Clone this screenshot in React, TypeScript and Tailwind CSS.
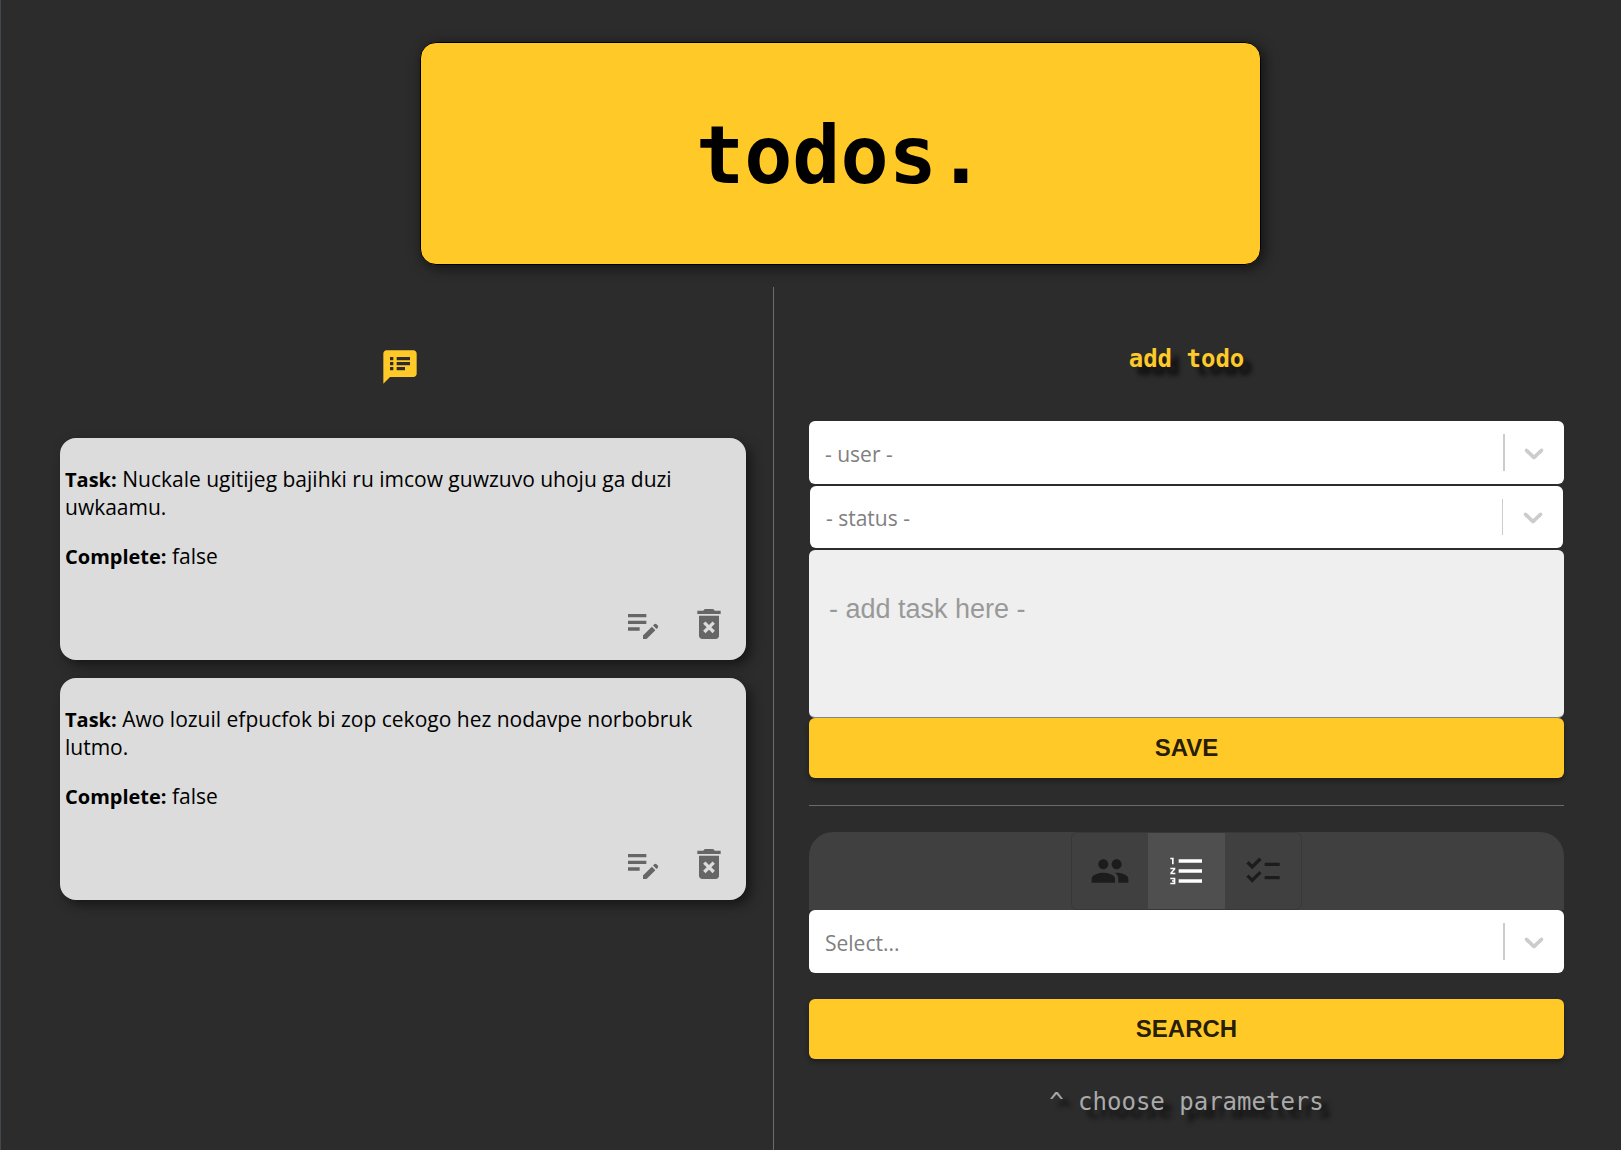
import type { ReactNode } from "react";
import {
  MdChecklist,
  MdDeleteForever,
  MdEditNote,
  MdFormatListNumbered,
  MdPeople,
  MdSpeakerNotes,
} from "react-icons/md";

const todos = [
  { id: 1, task: "Nuckale ugitijeg bajihki ru imcow guwzuvo uhoju ga duzi uwkaamu.", complete: false },
  { id: 2, task: "Awo lozuil efpucfok bi zop cekogo hez nodavpe norbobruk lutmo.", complete: false },
];

function TodoCard({ task, complete }: { task: string; complete: boolean }) {
  return (
    <li className="flex flex-col rounded-2xl bg-[#dcdcdc] pt-[27px] pr-[17px] pb-4 pl-[5px] text-[21px] leading-7 text-black shadow-[5px_5px_12px_rgba(0,0,0,0.5)]">
      <p className="pr-8">
        <b className="text-[20px] leading-none font-bold">Task:</b> {task}
      </p>
      <p className="mt-[21px]">
        <b className="text-[20px] leading-none font-bold">Complete:</b> {String(complete)}
      </p>
      <div className="mt-[34px] flex justify-end gap-[26px] text-[#666]">
        <button type="button" aria-label="Edit todo">
          <MdEditNote size={40} />
        </button>
        <button type="button" aria-label="Delete todo">
          <MdDeleteForever size={40} />
        </button>
      </div>
    </li>
  );
}

function Picker({ label, placeholder, inset = false }: { label: string; placeholder: string; inset?: boolean }) {
  return (
    <div
      className={
        inset
          ? "mx-px flex h-[62px] items-center rounded-md bg-white pr-[14px]"
          : "flex h-[63px] items-center rounded-md bg-white pr-[14px]"
      }
    >
      <select
        aria-label={label}
        defaultValue=""
        className="h-full min-w-0 flex-1 appearance-none bg-transparent pt-1 pl-4 text-[21px] text-[#808080] outline-none"
      >
        <option value="">{placeholder}</option>
      </select>
      <span className={inset ? "mr-[14px] h-9 w-px bg-[#ccc]" : "mr-[13px] h-[37px] w-[2px] bg-[#ccc]"} />
      <svg viewBox="0 0 20 20" className="pointer-events-none size-8 fill-[#ccc]" aria-hidden="true">
        <path d="M4.516 7.548c0.436-0.446 1.043-0.481 1.576 0l3.908 3.747 3.908-3.747c0.533-0.481 1.141-0.446 1.574 0 0.436 0.445 0.408 1.197 0 1.615-0.406 0.418-4.695 4.502-4.695 4.502-0.217 0.223-0.502 0.335-0.787 0.335s-0.57-0.112-0.789-0.335c0 0-4.287-4.084-4.695-4.502s-0.436-1.17 0-1.615z" />
      </svg>
    </div>
  );
}

function ActionButton({ children }: { children: ReactNode }) {
  return (
    <button
      type="submit"
      className="block h-[60px] w-full rounded-md bg-[#ffca28] font-['Liberation_Sans',sans-serif] text-[24px] font-bold text-black/87 shadow-[0_3px_5px_rgba(0,0,0,0.35)]"
    >
      {children}
    </button>
  );
}

function Toggle({ label, selected = false, children }: { label: string; selected?: boolean; children: ReactNode }) {
  return (
    <button
      type="button"
      aria-label={label}
      aria-pressed={selected}
      className={
        selected
          ? "flex h-full w-[77px] items-center justify-center bg-[#4f4f4f] text-white"
          : "flex h-full w-[76px] items-center justify-center text-[#1c1c1c]"
      }
    >
      {children}
    </button>
  );
}

export default function App() {
  return (
    <div className="flex min-h-screen flex-col border-l border-[#434750] bg-[#2c2c2c] pl-[59px] font-['Open_Sans',sans-serif]">
      <header className="mx-auto mt-[42px] flex h-[223px] w-full max-w-[841px] items-center justify-center rounded-2xl border border-black bg-[#ffca28] pt-1 shadow-[3px_3px_14px_rgba(0,0,0,0.6)]">
        <h1 className="font-['DejaVu_Sans_Mono',monospace] text-[80px] leading-none font-bold text-black">todos.</h1>
      </header>

      <main className="mt-[22px] grid flex-1 grid-cols-[714fr_847fr]">
        <section aria-label="Todos" className="border-r border-[#6b6b6b] pr-[27px]">
          <div className="mt-[60px] flex justify-center pr-[6px]">
            <MdSpeakerNotes size={40} className="text-[#ffca28]" />
          </div>
          <ul className="mt-[51px] flex flex-col gap-[18px]">
            {todos.map((todo) => (
              <TodoCard key={todo.id} task={todo.task} complete={todo.complete} />
            ))}
          </ul>
        </section>

        <section aria-label="Manage todos" className="pr-[57px] pb-6 pl-[35px]">
          <h2 className="mt-14 text-center font-['DejaVu_Sans_Mono',monospace] text-[24px] leading-8 font-bold text-[#ffca28] text-shadow-[8px_8px_5px_rgb(0_0_0/0.8)]">
            add todo
          </h2>
          <form className="mt-[46px]" onSubmit={(e) => e.preventDefault()}>
            <div className="flex flex-col gap-[2px]">
              <Picker label="User" placeholder="- user -" />
              <Picker label="Status" placeholder="- status -" inset />
              <textarea
                aria-label="Task"
                placeholder="- add task here -"
                className="block h-[168px] w-full resize-none rounded-md border-b border-[#858585] bg-[#efefef] px-5 pt-[43px] font-['Liberation_Sans',sans-serif] text-[27px] leading-8 outline-none placeholder:text-[#999]"
              />
            </div>
            <ActionButton>SAVE</ActionButton>
          </form>

          <hr className="mt-[27px] mb-[26px] border-[#6b6b6b]" />

          <form onSubmit={(e) => e.preventDefault()}>
            <div className="flex h-[78px] justify-center rounded-t-3xl bg-[#404040]">
              <div className="flex rounded-md border border-black/12">
                <Toggle label="By user">
                  <MdPeople size={40} />
                </Toggle>
                <Toggle label="By number" selected>
                  <MdFormatListNumbered size={40} />
                </Toggle>
                <Toggle label="By status">
                  <MdChecklist size={40} />
                </Toggle>
              </div>
            </div>
            <Picker label="Search value" placeholder="Select..." />
            <div className="mt-[26px]">
              <ActionButton>SEARCH</ActionButton>
            </div>
          </form>
          <p className="mt-[27px] text-center font-['DejaVu_Sans_Mono',monospace] text-[24px] leading-8 text-[#aaa] text-shadow-[8px_8px_5px_rgb(0_0_0/0.8)]">
            ^ choose parameters
          </p>
        </section>
      </main>
    </div>
  );
}
